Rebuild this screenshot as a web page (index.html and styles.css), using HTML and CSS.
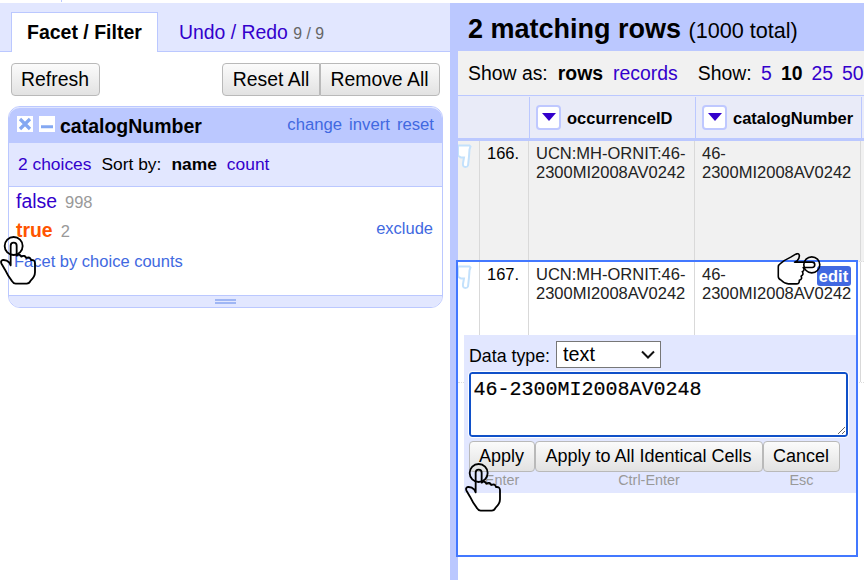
FILE: index.html
```html
<!DOCTYPE html>
<html lang="en">
<head>
<meta charset="utf-8">
<title>Facets and rows</title>
<link rel="stylesheet" href="styles.css">
</head>
<body>
<svg width="0" height="0" class="defs" aria-hidden="true">
  <symbol id="hand" viewBox="0 0 110 150">
    <circle cx="41" cy="33" r="27"/>
    <path d="M32 91V32q0-9 9-9t9 9v30q9-7 14 3q10-6 15 4q11-5 14 6q12-1 12 10v27q0 13-13 25q-4 9-12 9H47q-6 0-12-9q-10-12-20-33l-10-17q-5-10 4-12q11-1 19 8z"/>
  </symbol>
  <symbol id="thumb" viewBox="0 0 14 24">
    <path d="M0 1.500h11.500l1 1-1 3-.5 7-1 9q-.6 1.500-2.500 1.500-3 0-2.500-4l1-5.500H3L0 11.500z" fill="#fff" stroke="#c3e1fc" stroke-width="2"/>
  </symbol>
</svg>
<div class="app">
  <aside class="side">
    <div class="tabs">
      <div class="tab active">Facet / Filter</div>
      <div class="tab">Undo / Redo <small>9 / 9</small></div>
    </div>
    <div class="tools">
      <button class="btn refresh">Refresh</button>
      <div class="group"><button class="btn reset">Reset All</button><button class="btn remove">Remove All</button></div>
    </div>
    <section class="facet">
      <header class="facet-title">
        <svg class="box" viewBox="0 0 16 16"><path fill="#fff" d="M0 0h16v16H0z"/><path d="M3 3l10 10M13 3L3 13" stroke="#84a8f2" stroke-width="3.2"/></svg>
        <svg class="box" viewBox="0 0 16 16"><path fill="#fff" d="M0 0h16v16H0z"/><path d="M2 10.7h12" stroke="#84a8f2" stroke-width="3"/></svg>
        <b>catalogNumber</b>
        <nav><a>change</a><a>invert</a><a>reset</a></nav>
      </header>
      <div class="sort"><a>2 choices</a><span>Sort by:</span><b>name</b><a>count</a></div>
      <div class="choices">
        <div class="choice"><a>false</a><i>998</i></div>
        <div class="choice"><b>true</b><i>2</i><em>exclude</em></div>
        <div class="by-count">Facet by choice counts</div>
      </div>
      <footer class="grip"><span></span></footer>
    </section>
    <svg class="hand hand-true"><use href="#hand"/></svg>
  </aside>
  <main class="main">
    <h1>2 matching rows <small>(1000 total)</small></h1>
    <div class="view">
      <div class="show"><span>Show as:</span><b>rows</b><a class="records">records</a><span>Show:</span><div class="sizes"><a>5</a><b>10</b><a>25</a><a>50</a></div></div>
      <div class="row head">
        <div></div>
        <div><span class="menu"></span>occurrenceID</div>
        <div><span class="menu"></span>catalogNumber</div>
        <div></div>
      </div>
      <div class="row odd">
        <div><svg class="thumb"><use href="#thumb"/></svg></div>
        <div class="num">166.</div>
        <div>UCN:MH-ORNIT:46-<br>2300MI2008AV0242</div>
        <div>46-<br>2300MI2008AV0242</div>
        <div></div>
      </div>
      <div class="row">
        <div><svg class="thumb"><use href="#thumb"/></svg></div>
        <div class="num">167.</div>
        <div>UCN:MH-ORNIT:46-<br>2300MI2008AV0242</div>
        <div>46-<br>2300MI2008AV0242<span class="edit">edit</span></div>
        <div></div>
      </div>
    </div>
    <div class="frame">
      <form class="editor">
        <div class="type"><label for="type">Data type:</label><div class="pick"><select id="type"><option>text</option></select><svg viewBox="0 0 14 9"><path d="M1 1.500l6 6 6-6" fill="none" stroke="#111" stroke-width="2"/></svg></div></div>
        <textarea spellcheck="false">46-2300MI2008AV0248</textarea>
        <div class="actions">
          <div class="apply"><button type="button" class="btn">Apply</button><small>Enter</small></div>
          <div class="all"><button type="button" class="btn">Apply to All Identical Cells</button><small>Ctrl-Enter</small></div>
          <div class="cancel"><button type="button" class="btn">Cancel</button><small>Esc</small></div>
        </div>
      </form>
    </div>
    <svg class="hand hand-apply"><use href="#hand"/></svg>
    <svg class="hand hand-edit"><use href="#hand"/></svg>
  </main>
</div>
</body>
</html>
```
FILE: styles.css
```css
* { box-sizing: border-box; }
body { margin: 0; background: #fff; color: #000; font-family: "Liberation Sans", Arial, sans-serif; font-size: 19.4px; overflow: hidden; }
.defs { position: absolute; }
a { color: #3300cc; }
.app { display: flex; width: 864px; height: 580px; padding-top: 3px; position: relative; white-space: nowrap; }
.app::before { content: ""; position: absolute; left: 61px; top: 0; width: 1px; height: 2px; background: #bbc8ff; }
.side { width: 450px; }
.tabs { display: flex; height: 49px; padding: 9px 0 0 11px; background: #e2e7ff; border-bottom: 1px solid #bbc8ff; }
.tab { padding-left: 21px; line-height: 40px; color: #3300cc; }
.tab.active { width: 147px; height: 40px; padding-left: 15px; font-weight: bold; font-size: 19.5px; line-height: 38px; color: #000; background: #fff; border: 1px solid #bbc8ff; border-bottom: 0; }
.tab small { font-size: 15.8px; color: #666; }
.tools { display: flex; justify-content: space-between; padding: 11px 10px 0 11px; }
.group { display: flex; }
.btn { height: 33px; padding: 0 9px; border: 1px solid #b9b9b9; border-radius: 4px; background: linear-gradient(#fbfbfb, #e2e2e2); font: 19.4px "Liberation Sans", Arial, sans-serif; color: #000; white-space: nowrap; }
.refresh { width: 89px; padding: 0 1px 0 0; }
.reset { width: 98px; border-radius: 4px 0 0 4px; }
.remove { width: 120px; padding: 0 1px 0 0; border-radius: 0 4px 4px 0; }
.facet { margin: 10px 7px 0 8px; height: 202px; border: 1px solid #bbc8ff; border-radius: 12px; overflow: hidden; }
.facet-title { display: flex; height: 36px; padding: 0 8px; background: #bbc8ff; border-top: 1px solid #dfe5ff; border-radius: 11px 11px 0 0; line-height: 36px; }
.box { width: 16px; height: 16px; margin: 8px 6px 0 0; }
.facet-title b { font-size: 19.5px; margin-left: -1px; }
.facet-title nav { display: flex; gap: 7px; margin-left: auto; font-size: 16.7px; line-height: 34px; }
nav a { color: #4169e1; }
.sort { display: flex; gap: 10px; height: 44px; padding-left: 9px; background: #e2e7ff; border-bottom: 1px solid #bbc8ff; font-size: 17.4px; line-height: 43px; }
.choices { height: 108px; padding: 0 9px 0 7px; }
.choice { display: flex; height: 29px; line-height: 29px; }
.choice i { margin-left: 8px; color: #999; font-style: normal; font-size: 16.5px; line-height: 31px; }
.choice b { color: #ff5500; }
.choice em { margin-left: auto; color: #4169e1; font-style: normal; font-size: 16.5px; line-height: 25px; }
.by-count { margin: 7px 0 0 -2px; color: #4169e1; font-size: 16.5px; line-height: 19px; }
.grip { height: 12px; padding-top: 3px; background: #e2e7ff; border-top: 1px solid #bbc8ff; }
.grip span { display: block; width: 21px; height: 5px; margin: 0 auto; border: solid #9fb6f4; border-width: 2px 0; }
.main { width: 414px; padding-left: 8px; background: #bbc8ff; }
h1 { height: 48px; margin: 0; padding-left: 10px; font-size: 27px; line-height: 52px; }
h1 small { font-size: 21.6px; font-weight: normal; }
.view { width: 406px; height: 529px; overflow: hidden; background: #fff; }
.show { display: flex; gap: 10px; height: 45px; padding-left: 10px; background: #f1f1f1; border-bottom: 1px solid #bbc8ff; line-height: 45px; }
.show .records { margin-right: 10px; }
.sizes { display: flex; gap: 9px; margin-left: -.5px; }
.row { display: grid; grid-template-columns: 22px 49px 166px 166px 3px; height: 121px; font-size: 16.5px; line-height: 19px; color: #222; border-bottom: 1px dotted #ddd; }
.row > div { padding: 3px 0 0 7px; border-right: 1px solid #d9d9d9; position: relative; }
.row > div:last-child { border: 0; padding: 0; }
.row > div:first-child { padding: 0; }
.row .num { padding-right: 9px; text-align: right; color: #000; }
.odd { background: #f1f1f1; }
.head { grid-template-columns: 72px 166px 166px 2px; height: 45px; background: #e9ebf8; border-bottom: 3px solid #bbc8ff; font-weight: bold; color: #000; padding-top: 1px; }
.row.head > div { display: flex; align-items: center; gap: 6px; padding: 1px 0 0 6px; border-color: #bbc8ff; }
.menu { display: flex; align-items: center; justify-content: center; width: 25px; height: 25px; margin-top: -2px; border: 2px solid #bfc8ff; border-radius: 4px; background: #fff; }
.menu::after { content: ""; border: 7px solid transparent; border-top: 8px solid #3300cc; border-bottom: 0; }
.thumb { display: block; width: 14px; height: 24px; margin-top: 3px; }
.edit { position: absolute; left: 121.5px; top: 4px; width: 34px; height: 20px; border-radius: 3px; background: #4169e1; color: #fff; font-weight: bold; font-size: 16.5px; line-height: 20px; text-align: center; }
.frame { position: absolute; left: 456px; top: 260px; width: 402px; height: 297px; border: 2px solid #4378ff; padding: 73px 0 0 6px; }
.frame::before { content: ""; position: absolute; left: 0; top: 120px; width: 6px; border-top: 1px dotted #ddd; }
.editor { height: 158px; padding: 6px 5px 0; background: #e2e7ff; }
.type { display: flex; gap: 6px; height: 31px; font-size: 17.8px; line-height: 30px; }
.pick { position: relative; width: 105px; height: 27px; }
.pick svg { position: absolute; left: 85px; top: 9px; width: 14px; height: 9px; }
select { appearance: none; display: block; width: 105px; height: 27px; padding: 0 6px 2px; border: 1px solid #777; border-radius: 0; background: #fff; color: #000; font: 19.8px "Liberation Sans", Arial, sans-serif; }
textarea { display: block; width: 379px; height: 65px; padding: 4px 2.5px; border: 2px solid #1050c8; border-radius: 3px; outline: 1px solid #fff; background: #fff; color: #000; font: 20px "Liberation Mono", monospace; -webkit-text-stroke: .2px #000; }
.actions { display: flex; padding-top: 4px; }
.actions > div { display: flex; flex-direction: column; }
.actions .btn { height: 31px; padding: 0 1px 0 0; font-size: 18px; }
.actions small { color: #999; font-size: 14.4px; line-height: 16px; text-align: center; }
.apply { width: 66px; }
.all { width: 228px; }
.cancel { width: 77px; }
.hand { position: absolute; width: 36.67px; height: 50px; overflow: visible; fill: none; stroke: #000; stroke-width: 5.5; stroke-linejoin: round; }
.hand-true { left: 0; top: 235px; }
.hand-apply { left: 465px; top: 462.3px; }
.hand-edit { left: 780.5px; top: 244px; transform: rotate(90deg) scale(.89); }
```
